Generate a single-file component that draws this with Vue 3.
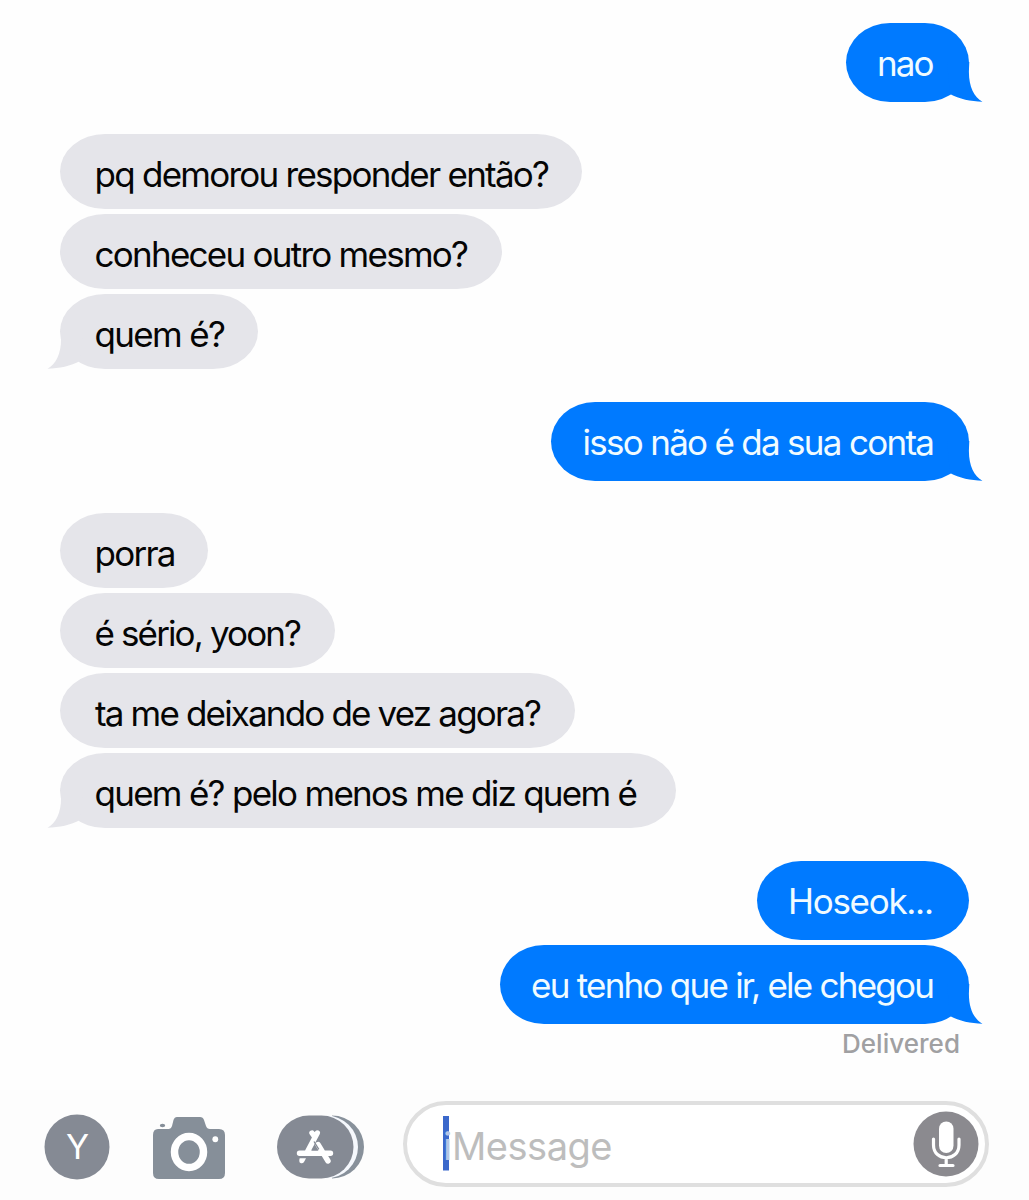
<script setup>
// `box` is the bubble width, `x` and `run` place the line of text inside it
const groups = [
  { side: 'sent', items: [{ text: 'nao', box: 123.5, x: 31, run: 57.5 }] },
  {
    side: 'received',
    items: [
      { text: 'pq demorou responder então?', box: 522, x: 34.5, run: 455.5 },
      { text: 'conheceu outro mesmo?', box: 441.5, x: 34.5, run: 374.5 },
      { text: 'quem é?', box: 198, x: 34.5, run: 131.5 },
    ],
  },
  { side: 'sent', items: [{ text: 'isso não é da sua conta', box: 418, x: 31.5, run: 352.5 }] },
  {
    side: 'received',
    items: [
      { text: 'porra', box: 147.5, x: 34.5, run: 82 },
      { text: 'é sério, yoon?', box: 275, x: 34.5, run: 207.5 },
      { text: 'ta me deixando de vez agora?', box: 515, x: 35, run: 447 },
      { text: 'quem é? pelo menos me diz quem é', box: 616, x: 34.5, run: 543.5 },
    ],
  },
  {
    side: 'sent',
    items: [
      { text: 'Hoseok...', box: 212, x: 31, run: 146 },
      { text: 'eu tenho que ir, ele chegou', box: 469, x: 31, run: 404 },
    ],
  },
]
</script>

<template>
  <div class="screen">
    <main class="thread">
      <section v-for="(g, gi) in groups" :key="gi" class="group" :class="g.side">
        <div v-for="(m, i) in g.items" :key="i" class="bubble" :style="{ width: m.box + 'px' }">
          <svg class="line" width="100%" height="100%">
            <text :x="m.x" y="52.6" :textLength="m.run">{{ m.text }}</text>
          </svg>
          <svg v-if="i === g.items.length - 1" class="tail" width="40" height="42" viewBox="0 0 40 42">
            <path d="M4 2H26.300Q26 8 25.900 12C26 27 31 37 39.500 41.700C28 41.500 16 39 7 34Z" />
          </svg>
        </div>
      </section>
      <svg class="status" width="122" height="34"><text x="3" y="24" textLength="118">Delivered</text></svg>
    </main>

    <footer class="bar">
      <svg class="avatar" width="66" height="66" viewBox="0 0 66 66">
        <circle cx="33" cy="33" r="32.5" fill="#858a94" />
        <text x="33.500" y="45" text-anchor="middle">Y</text>
      </svg>
      <svg class="camera" width="73" height="63" viewBox="0 0 73 63">
        <path fill="#868f99" d="M5 12H15.500Q18 12 19 9L20.500 3Q21.500 0 24 0H47Q50 0 51 3L53 9Q54 12 57 12H66Q72 12 72 18V56Q72 62 66 62H6Q0 62 0 56V18Q0 12 5 12Z" />
        <ellipse cx="9.500" cy="8.500" rx="2.700" ry="1.700" fill="#868f99" />
        <ellipse cx="36" cy="35" rx="14.500" ry="15.500" fill="#868f99" stroke="#fff" stroke-width="7.500" />
        <ellipse cx="62.300" cy="22.300" rx="2.900" ry="3" fill="#fff" />
      </svg>
      <svg class="apps" width="88" height="64" viewBox="0 0 88 64">
        <path fill="#88919b" d="M55 .5A32 31.500 0 0 1 55 63.500Z" />
        <path fill="#f5f8fd" d="M49 .5A32 31.500 0 0 1 49 63.500Z" />
        <rect x="0" y=".5" width="76.500" height="63" rx="32" ry="31.500" fill="#858a94" />
        <g fill="none" stroke="#fff" stroke-width="5.400" stroke-linecap="round">
          <path d="M40.300 18L30.300 37M35 18L37.500 21.500M41 29.500L51 46M22.500 38.300H53.500" />
        </g>
        <path d="M37 26.500L41.800 34.300" stroke="#858a94" stroke-width="1.300" />
        <path d="M37.700 30.500L41 35.600H34.700Z" fill="#858a94" />
        <path d="M22.700 43.200H29L27 47Q25.500 49 23.500 48T22.700 43.200Z" fill="#fff" />
      </svg>
      <div class="field">
        <svg class="placeholder" width="190" height="60">
          <rect x="0" y="2" width="6" height="54.500" fill="#3b68cb" />
          <text class="lead" x="0" y="45.500">i</text>
          <text x="9" y="45.500" textLength="160.500">Message</text>
        </svg>
        <svg class="mic" width="66" height="66" viewBox="0 0 66 66">
          <circle cx="33" cy="33" r="32.500" fill="#8b8a8f" />
          <rect x="26" y="10.500" width="14.500" height="31.500" rx="7.250" fill="#fff" />
          <path d="M20.500 28V34C20.500 51 46 51 46 34V28M33.200 47V54M27 54.500H40" fill="none" stroke="#fff" stroke-width="3.200" stroke-linecap="round" />
        </svg>
      </div>
    </footer>
  </div>
</template>

<style>
body {
  margin: 0;
  background: #fefefe;
}
</style>

<style scoped>
.screen {
  width: 1029px;
  height: 1200px;
  box-sizing: border-box;
  overflow: hidden;
  display: flex;
  flex-direction: column;
  background: #fefefe;
  font-family: Inter, "Liberation Sans", sans-serif;
}
svg {
  display: block;
  flex: none;
}
.thread {
  flex: 1;
  box-sizing: border-box;
  padding: 23px 60px 0;
  display: flex;
  flex-direction: column;
}
.group {
  display: flex;
  flex-direction: column;
  gap: 5px;
  margin-bottom: 32.4px;
}
.group:nth-last-of-type(1) {
  margin-bottom: 0;
}
.received {
  align-items: flex-start;
}
.sent {
  align-items: flex-end;
}
.bubble {
  position: relative;
  height: 75px;
  border-radius: 45px / 37.5px;
  background: #e5e5ea;
  color: #050505;
}
.sent .bubble {
  height: 79px;
  border-radius: 44px / 39.5px;
  background: #007aff;
  color: #f0fbff;
}
.line {
  position: relative;
  z-index: 1;
  overflow: visible;
}
.line text {
  font-size: 35px;
  fill: currentColor;
}
.tail {
  position: absolute;
  bottom: 0;
  left: -13px;
  transform: scaleX(-1);
  fill: #e5e5ea;
}
.sent .tail {
  left: auto;
  right: -13.500px;
  transform: none;
  fill: #007aff;
}
.status {
  align-self: flex-end;
  margin: 5px 8px 0 0;
}
.status text {
  font-size: 26px;
  font-weight: 450;
  fill: #a0a0a2;
}
.bar {
  height: 110px;
  box-sizing: border-box;
  padding: 11px 40px 0 44.500px;
  display: flex;
  align-items: flex-start;
  background: #fdfdfd;
}
.avatar {
  margin-top: 12.500px;
  margin-left: -0.500px;
}
.avatar text {
  font-size: 34px;
  fill: #fff;
}
.camera {
  margin: 16px 0 0 43px;
}
.apps {
  margin: 14px 0 0 51px;
}
.field {
  margin-left: 38px;
  width: 586px;
  height: 86px;
  flex: none;
  box-sizing: border-box;
  border: 4px solid #dfdfdf;
  border-radius: 43px;
  background: #fff;
  padding: 0 6px 0 36px;
  display: flex;
  justify-content: space-between;
}
.placeholder {
  margin-top: 9px;
}
.placeholder text {
  font-size: 38px;
  fill: #bdbdbd;
}
.placeholder .lead {
  fill: #b4c4e6;
}
.mic {
  margin-top: 5.500px;
}
</style>
